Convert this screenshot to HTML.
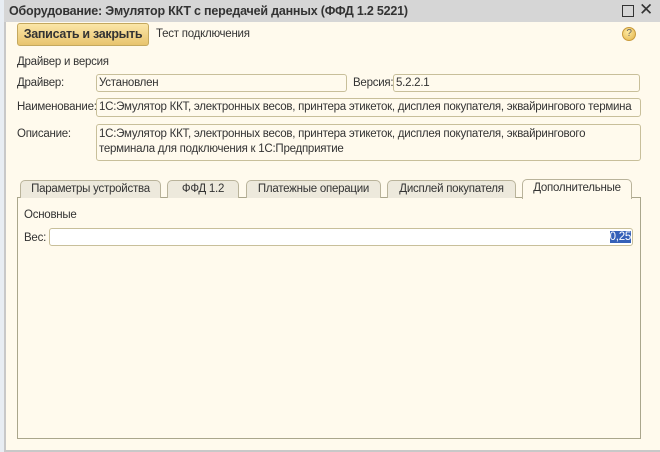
<!DOCTYPE html>
<html><head><meta charset="utf-8"><style>
body{margin:0;width:660px;height:452px;overflow:hidden;background:#fff;font-family:"Liberation Sans",sans-serif;font-size:11.5px;letter-spacing:-0.25px;color:#333;position:relative}
.a{position:absolute}
.win{left:4px;top:0;width:656px;height:452px;background:#fffaed;border-left:2px solid #c8c8c8;border-bottom:2px solid #c8c8c8;box-sizing:border-box}
.title{left:4px;top:0;width:656px;height:22px;background:#d6d6d6}
.inp{position:absolute;background:#fffaed;border:1px solid #c8bf9a;border-radius:3px;box-sizing:border-box;padding:2px 2px 0;white-space:nowrap;overflow:hidden;color:#333}
.tab{position:absolute;top:180px;height:18px;background:#ede9dc;border:1px solid #b9b39a;border-bottom:none;border-radius:5px 5px 0 0;box-sizing:border-box;text-align:center;line-height:17px}
</style></head><body>
<div class="a" style="left:0;top:0;width:4px;height:452px;background:#e8edf3"></div>
<div class="a win"></div>
<div class="a title"></div>
<div class="a" style="left:9px;top:4px;font-weight:bold;font-size:12.5px;letter-spacing:-0.2px;color:#333">Оборудование: Эмулятор ККТ с передачей данных (ФФД 1.2 5221)</div>
<div class="a" style="left:622px;top:5px;width:10px;height:10px;border:1.5px solid #333"></div>
<div class="a" style="left:639px;top:0px;font-size:17px;color:#333">✕</div>
<div class="a" style="left:17px;top:23px;width:132px;height:23px;box-sizing:border-box;border:1px solid #c4a85e;border-radius:3px;background:linear-gradient(#fbe6a8,#e8c46e);font-weight:bold;font-size:12.5px;letter-spacing:-0.3px;line-height:21px;text-align:center;color:#333">Записать и закрыть</div>
<div class="a" style="left:156px;top:28px">Тест подключения</div>
<div class="a" style="left:622px;top:27px;width:14px;height:14px;border-radius:50%;background:radial-gradient(circle at 40% 35%,#fde9a0,#e3b44a);border:1px solid #c99a3a;box-sizing:border-box;font-size:10px;line-height:12px;text-align:center;color:#666">?</div>
<div class="a" style="left:17px;top:56px">Драйвер и версия</div>
<div class="a" style="left:17px;top:77px">Драйвер:</div>
<div class="inp" style="left:96px;top:74px;width:251px;height:18px">Установлен</div>
<div class="a" style="left:353px;top:77px">Версия:</div>
<div class="inp" style="left:393px;top:74px;width:247px;height:18px">5.2.2.1</div>
<div class="a" style="left:17px;top:101px">Наименование:</div>
<div class="inp" style="left:96px;top:98px;width:545px;height:19px">1С:Эмулятор ККТ, электронных весов, принтера этикеток, дисплея покупателя, эквайрингового термина</div>
<div class="a" style="left:17px;top:128px">Описание:</div>
<div class="inp" style="left:96px;top:124px;width:545px;height:37px;white-space:normal;line-height:15px">1С:Эмулятор ККТ, электронных весов, принтера этикеток, дисплея покупателя, эквайрингового терминала для подключения к 1С:Предприятие</div>
<div class="a" style="left:17px;top:197px;width:624px;height:242px;border:1px solid #aaa68c;box-sizing:border-box"></div>
<div class="tab" style="left:20px;width:141px">Параметры устройства</div>
<div class="tab" style="left:167px;width:72px">ФФД 1.2</div>
<div class="tab" style="left:246px;width:135px">Платежные операции</div>
<div class="tab" style="left:387px;width:129px">Дисплей покупателя</div>
<div class="tab" style="left:522px;top:179px;width:110px;height:20px;background:#fffaed">Дополнительные</div>
<div class="a" style="left:24px;top:209px">Основные</div>
<div class="a" style="left:24px;top:232px">Вес:</div>
<div class="inp" style="left:49px;top:228px;width:584px;height:18px;background:#fff;text-align:right;padding:2px 1px 0"><span style="background:#3560b8;color:#fff">0,25</span></div>
</body></html>
